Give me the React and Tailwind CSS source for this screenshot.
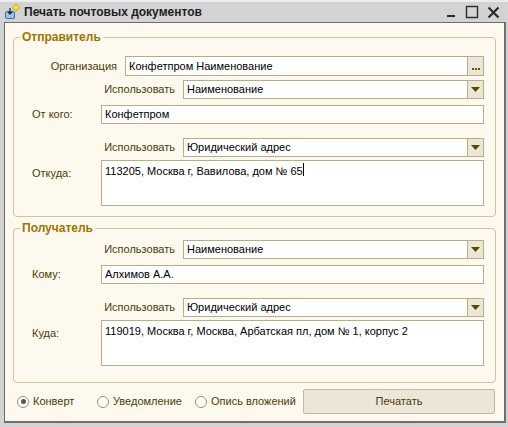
import { useState } from "react";

const font = { fontFamily: '"Liberation Sans", Arial, sans-serif' };

const WindowIcon = () => (
  <svg width="18" height="18" viewBox="0 0 18 18">
    <rect x="2.5" y="8.5" width="9" height="7" rx="1.5" fill="#9cc3e4" stroke="#3a6ea0" />
    <path d="M7 5v6M5 9l2 2 2-2" stroke="#222" strokeWidth="1.2" fill="none" />
    <path d="M13 1l3.5 3.5L13 8 9.5 4.5z" fill="#ffd84a" stroke="#d9a400" />
  </svg>
);

const TitleButtons = () => (
  <div className="flex items-center gap-[8px] mr-[8px]">
    <svg width="11" height="12" viewBox="0 0 11 12">
      <rect x="1" y="9" width="8" height="2" fill="#2a2a2a" />
    </svg>
    <svg width="14" height="14" viewBox="0 0 14 14">
      <rect x="1.5" y="1.5" width="11" height="11" fill="none" stroke="#2a2a2a" strokeWidth="1.4" />
    </svg>
    <svg width="13" height="13" viewBox="0 0 13 13">
      <path d="M1.5 1.5l10 10M11.5 1.5l-10 10" stroke="#2a2a2a" strokeWidth="2.2" />
    </svg>
  </div>
);

const Label = ({ children, className = "" }) => (
  <span className={"text-[11px] text-[#4a3c08] whitespace-nowrap " + className}>{children}</span>
);

const TextBox = ({ value, className = "", children }) => (
  <div className={"flex items-center bg-white border border-[#b8ad86] px-[3px] text-[11px] text-black whitespace-nowrap overflow-hidden " + className}>
    {value}
    {children}
  </div>
);

const DropButton = () => (
  <div className="w-[16px] self-stretch flex items-center justify-center bg-[#ece6d8] border-l border-[#b8ad86]">
    <svg width="9" height="5" viewBox="0 0 9 5">
      <path d="M0 0h9L4.5 5z" fill="#5c4500" />
    </svg>
  </div>
);

const Select = ({ value }) => (
  <div className="flex items-stretch h-[19px] w-[301px] bg-white border border-[#b8ad86]">
    <div className="flex-1 flex items-center px-[3px] text-[11px] text-black whitespace-nowrap overflow-hidden">
      {value}
    </div>
    <DropButton />
  </div>
);

const UseRow = ({ value, className = "" }) => (
  <div className={"flex items-center justify-end gap-[8px] " + className}>
    <Label>Использовать</Label>
    <Select value={value} />
  </div>
);

const FieldRow = ({ label, value, className = "", tall = false, children }) => (
  <div className={"flex " + (tall ? "items-start " : "items-center ") + className}>
    <Label className={"flex-1 " + (tall ? "pt-[5px]" : "")}>{label}</Label>
    <TextBox
      value={value}
      className={"w-[383px] " + (tall ? "h-[46px] items-start pt-[2px]" : "h-[19px]")}
    >
      {children}
    </TextBox>
  </div>
);

const Group = ({ title, className = "", children }) => (
  <fieldset className={"mx-[8px] border border-[#cfc4a0] rounded-[4px] " + className}>
    <legend className="ml-[6px] px-[2px] text-[12px] leading-[15px] font-bold text-[#a07400]">{title}</legend>
    <div className="pl-[18px] pr-[11px]">{children}</div>
  </fieldset>
);

const Radio = ({ label, checked, onClick, className = "" }) => (
  <button type="button" onClick={onClick} className={"flex items-center gap-[4px] " + className}>
    <span className="w-[12px] h-[12px] rounded-full border border-[#9b916f] bg-white flex items-center justify-center">
      {checked && <span className="w-[5px] h-[5px] rounded-full bg-[#555]" />}
    </span>
    <span className="text-[11px] text-[#4a3c08]">{label}</span>
  </button>
);

export default function App() {
  const [kind, setKind] = useState("envelope");

  return (
    <div style={font} className="w-[508px] h-[427px] bg-[#d3d3d3] overflow-hidden flex flex-col">
      <div className="h-[22px] flex items-center border-t-2 border-[#ececec]">
        <div className="ml-[3px] mr-[3px]">
          <WindowIcon />
        </div>
        <span className="flex-1 text-[12px] font-bold text-[#1e1e1e]">Печать почтовых документов</span>
        <TitleButtons />
      </div>

      <div className="ml-[4px] w-[502px] h-[401px] bg-[#fdf9ee] border border-r-2 border-b-2 border-[#6e6e6e] pt-[7px] flex flex-col">
        <Group title="Отправитель" className="pb-[10px]">
          <div className="flex items-center justify-end gap-[8px] mt-[11px]">
            <Label>Организация</Label>
            <div className="flex items-stretch h-[20px] w-[359px] bg-white border border-[#b8ad86]">
              <div className="flex-1 flex items-center px-[3px] text-[11px] text-black">Конфетпром Наименование</div>
              <div className="w-[16px] flex items-end justify-center pb-[5px] gap-[1px] bg-[#ece6d8] border-l border-[#b8ad86]">
                <span className="w-[2px] h-[2px] bg-[#6b5200]" />
                <span className="w-[2px] h-[2px] bg-[#6b5200]" />
                <span className="w-[2px] h-[2px] bg-[#6b5200]" />
              </div>
            </div>
          </div>
          <UseRow value="Наименование" className="mt-[4px]" />
          <FieldRow label="От кого:" value="Конфетпром" className="mt-[6px]" />
          <UseRow value="Юридический адрес" className="mt-[14px]" />
          <FieldRow label="Откуда:" value="113205, Москва г, Вавилова, дом № 65" className="mt-[3px]" tall>
            <span className="inline-block w-[1px] h-[13px] bg-black" />
          </FieldRow>
        </Group>

        <Group title="Получатель" className="mt-[4px] pb-[16px]">
          <UseRow value="Наименование" className="mt-[4px]" />
          <FieldRow label="Кому:" value="Алхимов А.А." className="mt-[6px]" />
          <UseRow value="Юридический адрес" className="mt-[14px]" />
          <FieldRow
            label="Куда:"
            value="119019, Москва г, Москва, Арбатская пл, дом № 1, корпус 2"
            className="mt-[3px]"
            tall
          />
        </Group>

        <div className="flex items-center mt-[6px] ml-[12px] mr-[9px]">
          <div className="flex items-center flex-1">
            <Radio className="w-[80px]" label="Конверт" checked={kind === "envelope"} onClick={() => setKind("envelope")} />
            <Radio className="w-[98px]" label="Уведомление" checked={kind === "notice"} onClick={() => setKind("notice")} />
            <Radio label="Опись вложений" checked={kind === "list"} onClick={() => setKind("list")} />
          </div>
          <button
            type="button"
            className="w-[192px] h-[25px] bg-[#ece6d8] border border-[#c4b993] rounded-[2px] text-[11px] text-[#4a3c08]"
          >
            Печатать
          </button>
        </div>
      </div>
    </div>
  );
}
